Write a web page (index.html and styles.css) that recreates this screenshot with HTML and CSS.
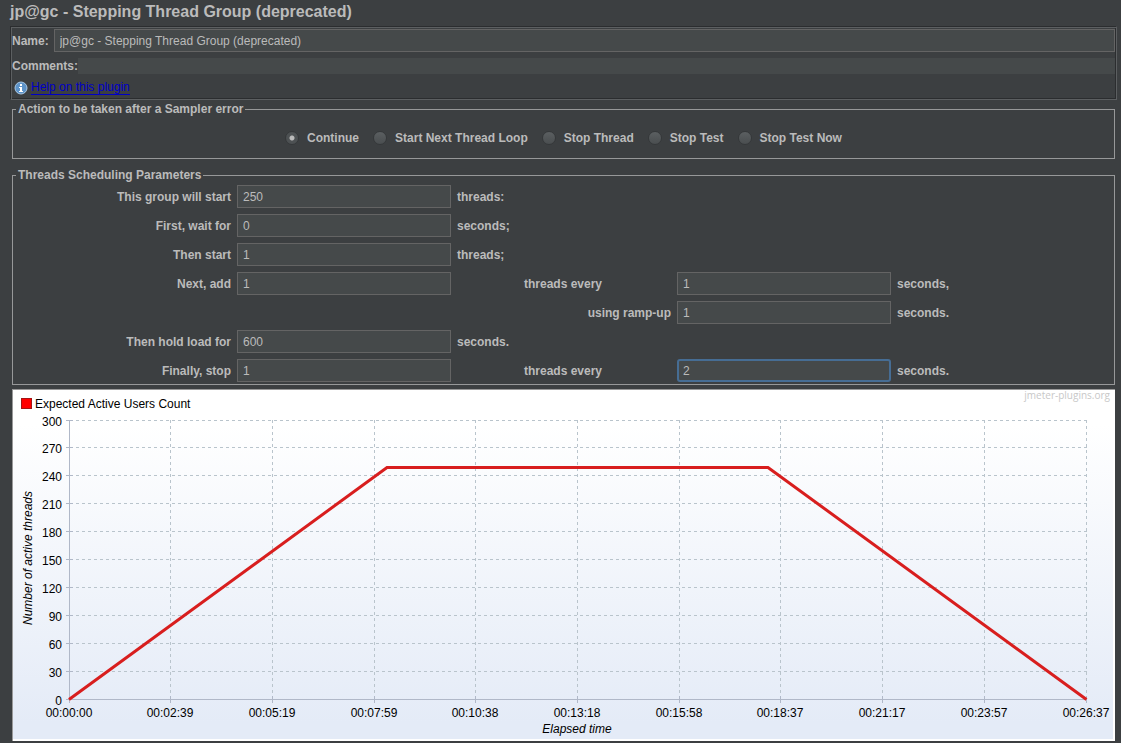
FILE: index.html
```html
<!DOCTYPE html>
<html lang="en">
<head>
<meta charset="utf-8">
<title>jp@gc - Stepping Thread Group</title>
<link rel="stylesheet" href="styles.css">
</head>
<body>
<main class="page">
  <h1 class="title">jp@gc - Stepping Thread Group (deprecated)</h1>

  <section class="header">
    <div class="row name-row">
      <label for="name">Name:</label>
      <input class="field" id="name" type="text" value="jp@gc - Stepping Thread Group (deprecated)">
    </div>
    <div class="row">
      <label for="comments">Comments:</label>
      <input class="plain" id="comments" type="text">
    </div>
    <div class="help">
      <svg class="info" viewBox="0 0 14 14" aria-hidden="true">
        <circle cx="7" cy="7" r="6" fill="#5d93c8" stroke="#a9c9e6" stroke-width="1"/>
        <path d="M6 3h2v2H6zM5 6h3v4h1v1H5v-1h1V7H5z" fill="#fff"/>
      </svg>
      <a href="#help">Help on this plugin</a>
    </div>
  </section>

  <fieldset class="group actions">
    <legend>Action to be taken after a Sampler error</legend>
    <label class="option"><input type="radio" name="action" checked>Continue</label>
    <label class="option"><input type="radio" name="action">Start Next Thread Loop</label>
    <label class="option"><input type="radio" name="action">Stop Thread</label>
    <label class="option"><input type="radio" name="action">Stop Test</label>
    <label class="option"><input type="radio" name="action">Stop Test Now</label>
  </fieldset>

  <fieldset class="group schedule">
    <legend>Threads Scheduling Parameters</legend>
    <div class="grid">
      <label class="lead" for="total">This group will start</label>
      <input class="field" id="total" type="text" value="250">
      <span class="unit">threads:</span>

      <label class="lead" for="wait">First, wait for</label>
      <input class="field" id="wait" type="text" value="0">
      <span class="unit">seconds;</span>

      <label class="lead" for="start">Then start</label>
      <input class="field" id="start" type="text" value="1">
      <span class="unit">threads;</span>

      <label class="lead" for="add">Next, add</label>
      <input class="field" id="add" type="text" value="1">
      <label class="middle" for="add-every">threads every</label>
      <input class="field" id="add-every" type="text" value="1">
      <span class="unit">seconds,</span>

      <label class="middle end" for="ramp">using ramp-up</label>
      <input class="field" id="ramp" type="text" value="1">
      <span class="unit">seconds.</span>

      <label class="lead" for="hold">Then hold load for</label>
      <input class="field" id="hold" type="text" value="600">
      <span class="unit">seconds.</span>

      <label class="lead" for="stop">Finally, stop</label>
      <input class="field" id="stop" type="text" value="1">
      <label class="middle" for="stop-every">threads every</label>
      <input class="field active" id="stop-every" type="text" value="2">
      <span class="unit">seconds.</span>
    </div>
  </fieldset>

  <section class="chart">
    <svg viewBox="0 0 1103 352" role="img" aria-label="Expected Active Users Count">
      <rect x="9.5" y="9.5" width="10" height="10" fill="#f00" stroke="#a31515"/>
      <text x="23" y="19">Expected Active Users Count</text>
      <text class="mark" x="1098" y="10" text-anchor="end">jmeter-plugins.org</text>

      <path class="lines" d="M58 31.5H1075M58 58.5H1075M58 86.5H1075M58 114.5H1075M58 142.5H1075M58 170.5H1075M58 198.5H1075M58 226.5H1075M58 254.5H1075M58 282.5H1075"/>
      <path class="lines" d="M158.5 31V310M260.5 31V310M362.5 31V310M463.5 31V310M565.5 31V310M667.5 31V310M768.5 31V310M870.5 31V310M972.5 31V310M1074.5 31V310"/>
      <path class="axis" d="M57.5 31V314M54 310.5H1075M54 31.5H61M54 58.5H61M54 86.5H61M54 114.5H61M54 142.5H61M54 170.5H61M54 198.5H61M54 226.5H61M54 254.5H61M54 282.5H61M158.5 307V314M260.5 307V314M362.5 307V314M463.5 307V314M565.5 307V314M667.5 307V314M768.5 307V314M870.5 307V314M972.5 307V314M1074.5 307V314"/>
      <path class="curve" d="M57 310.5L375 78.500H756L1074.500 310.500"/>

      <g text-anchor="end">
        <text x="50" y="37">300</text>
        <text x="50" y="64">270</text>
        <text x="50" y="92">240</text>
        <text x="50" y="120">210</text>
        <text x="50" y="148">180</text>
        <text x="50" y="176">150</text>
        <text x="50" y="204">120</text>
        <text x="50" y="232">90</text>
        <text x="50" y="260">60</text>
        <text x="50" y="288">30</text>
        <text x="50" y="316">0</text>
      </g>
      <g text-anchor="middle">
        <text x="57" y="328">00:00:00</text>
        <text x="158" y="328">00:02:39</text>
        <text x="260" y="328">00:05:19</text>
        <text x="362" y="328">00:07:59</text>
        <text x="463" y="328">00:10:38</text>
        <text x="565" y="328">00:13:18</text>
        <text x="667" y="328">00:15:58</text>
        <text x="768" y="328">00:18:37</text>
        <text x="870" y="328">00:21:17</text>
        <text x="972" y="328">00:23:57</text>
        <text x="1074" y="328">00:26:37</text>
        <text class="name" x="565" y="344">Elapsed time</text>
        <text class="name" transform="translate(20 169) rotate(-90)">Number of active threads</text>
      </g>
    </svg>
  </section>
</main>
</body>
</html>
```

FILE: styles.css
```css
* {
  box-sizing: border-box;
}

body {
  margin: 0;
  background: #3c3f41;
  color: #bbb;
  font: bold 12px/16px "Liberation Sans", Arial, sans-serif;
}

.page {
  padding: 2px 4px 1px 10px;
}

.title {
  margin: 0 0 4px;
  font-size: 16px;
  line-height: 20px;
}

.header {
  display: flex;
  flex-direction: column;
  padding: 2px 1px 3px 2px;
  border: 1px solid;
  border-color: #2b2d2f #5c5f61 #5c5f61 #2b2d2f;
  box-shadow: inset 1px 1px #5c5f61, inset -1px -1px #2b2d2f;
}

.row {
  display: flex;
  align-items: center;
  margin-left: -1px;
}

.name-row {
  gap: 5px;
  margin-bottom: 6px;
}

.row input {
  flex: 1;
}

.field {
  width: 100%;
  min-width: 0;
  height: 23px;
  padding: 0 5px;
  border: 1px solid #646464;
  border-radius: 0;
  background: #45494a;
  color: #bbb;
  font: 12px/16px "Liberation Sans", Arial, sans-serif;
}

.plain {
  height: 16px;
  padding: 0;
  border: 0;
  background: #45494a;
  color: #bbb;
  font: 12px/16px "Liberation Sans", Arial, sans-serif;
}

.help {
  display: flex;
  align-items: center;
  gap: 3px;
  padding: 6px 0 1px 1px;
  font-weight: normal;
}

.help a {
  border-bottom: 1px solid #0000c8;
  color: #0000c8;
  line-height: 14px;
  text-decoration: none;
}

.info {
  width: 14px;
  height: 14px;
}

.group {
  min-width: 0;
  margin: 0 2px;
  padding: 0;
  border: 1px solid #979899;
}

.group legend {
  margin-left: 3px;
  padding: 0 2px;
}

.actions {
  display: flex;
  justify-content: center;
  gap: 14px;
  padding: 13px 0 12px;
  margin-top: 1px;
}

.option {
  display: flex;
  align-items: center;
  gap: 8px;
}

.option input {
  width: 14px;
  height: 14px;
  margin: 0;
  appearance: none;
  border: 1px solid #35383a;
  border-radius: 50%;
  background: linear-gradient(#5b5f61, #4a4e50);
}

.option input:checked {
  background: radial-gradient(circle, #bbb 0 2px, #4d5153 3px);
}

.schedule {
  margin-top: 8px;
  padding-bottom: 2px;
}

.grid {
  display: grid;
  grid-template-columns: 218fr 214fr 61fr 147fr 214fr 217fr;
  gap: 6px;
  align-items: center;
  margin-top: 2px;
}

.lead {
  grid-column: 1;
  text-align: right;
}

.middle {
  grid-column: 4;
}

.end {
  text-align: right;
}

.unit {
  white-space: nowrap;
}

.active {
  border: 2px solid #466d94;
  border-radius: 3px;
  padding: 0 4px;
}

.chart {
  margin: 4px 2px 0;
  background: linear-gradient(#fff 10%, #e4ebf7 95%);
  box-shadow: inset 1px 1px #999, inset -2px -2px #fff;
}

.chart svg {
  display: block;
  width: 100%;
  height: auto;
  font-weight: normal;
}

.chart .name {
  font-style: italic;
}

.chart .mark {
  fill: #c8c8c8;
  font: 10px "Open Sans", sans-serif;
}

.lines {
  fill: none;
  stroke: #b9c4cc;
  stroke-dasharray: 3 3;
}

.axis {
  fill: none;
  stroke: #b0b8c8;
}

.curve {
  fill: none;
  stroke: #d81e1e;
  stroke-width: 3;
}
```
